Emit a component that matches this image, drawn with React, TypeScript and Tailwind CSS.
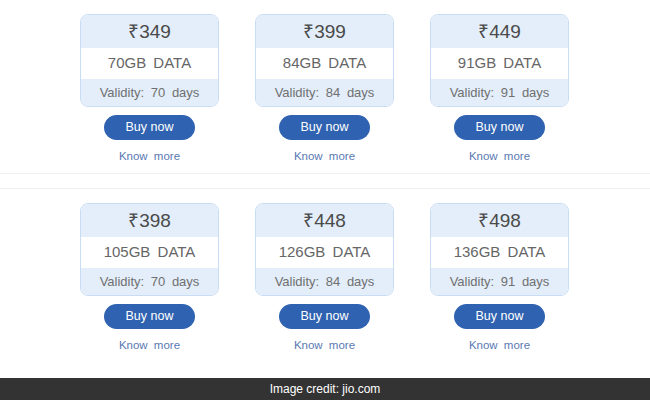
const rows = [
  [
    { price: "349", data: "70GB", days: 70 },
    { price: "399", data: "84GB", days: 84 },
    { price: "449", data: "91GB", days: 91 },
  ],
  [
    { price: "398", data: "105GB", days: 70 },
    { price: "448", data: "126GB", days: 84 },
    { price: "498", data: "136GB", days: 91 },
  ],
];

interface PlanProps {
  price: string;
  data: string;
  days: number;
}

const Plan: React.FC<PlanProps> = ({ price, data, days }) => {
  return (
    <div className="w-[139px] flex flex-col items-center">
      {/* plan box */}
      <div className="w-full h-[93px] rounded-lg border border-[#c8ddf4] overflow-hidden flex flex-col text-[#5a5a5a] [word-spacing:3px]">
        <div className="h-[33px] bg-[#e3eefa] flex items-center justify-center text-[19px] pt-[1px] text-[#4a4a4a]">
          ₹{price}
        </div>
        <div className="h-[31px] bg-white flex items-center justify-center text-[15px] text-[#666]">
          {data} DATA
        </div>
        <div className="flex-1 bg-[#e3eefa] flex items-center justify-center text-[13px] text-[#707070]">
          Validity: {days} days
        </div>
      </div>
      <button className="mt-[8px] w-[91px] h-[25px] rounded-full bg-[#2f62b0] text-white text-[12.5px] flex items-center justify-center">
        Buy now
      </button>
      <div className="mt-[8px] text-[11.5px] text-[#5a79b2] [word-spacing:3px]">Know more</div>
    </div>
  );
};

export default function App() {
  return (
    <div className="w-[650px] h-[400px] bg-white flex flex-col overflow-hidden font-['Liberation_Sans',Arial,sans-serif]">
      <div className="h-[174px] pt-[14px] pr-[1px] border-b border-[#efefef] flex justify-center gap-[36px]">
        {rows[0].map((p) => (
          <Plan key={p.price} {...p} />
        ))}
      </div>
      <div className="h-[14px]" />
      <div className="h-[190px] pt-[14px] pr-[1px] border-t border-[#efefef] flex justify-center gap-[36px]">
        {rows[1].map((p) => (
          <Plan key={p.price} {...p} />
        ))}
      </div>
      <div className="h-[22px] bg-[#333] text-white text-[12px] flex items-center justify-center">
        Image credit: jio.com
      </div>
    </div>
  );
}
